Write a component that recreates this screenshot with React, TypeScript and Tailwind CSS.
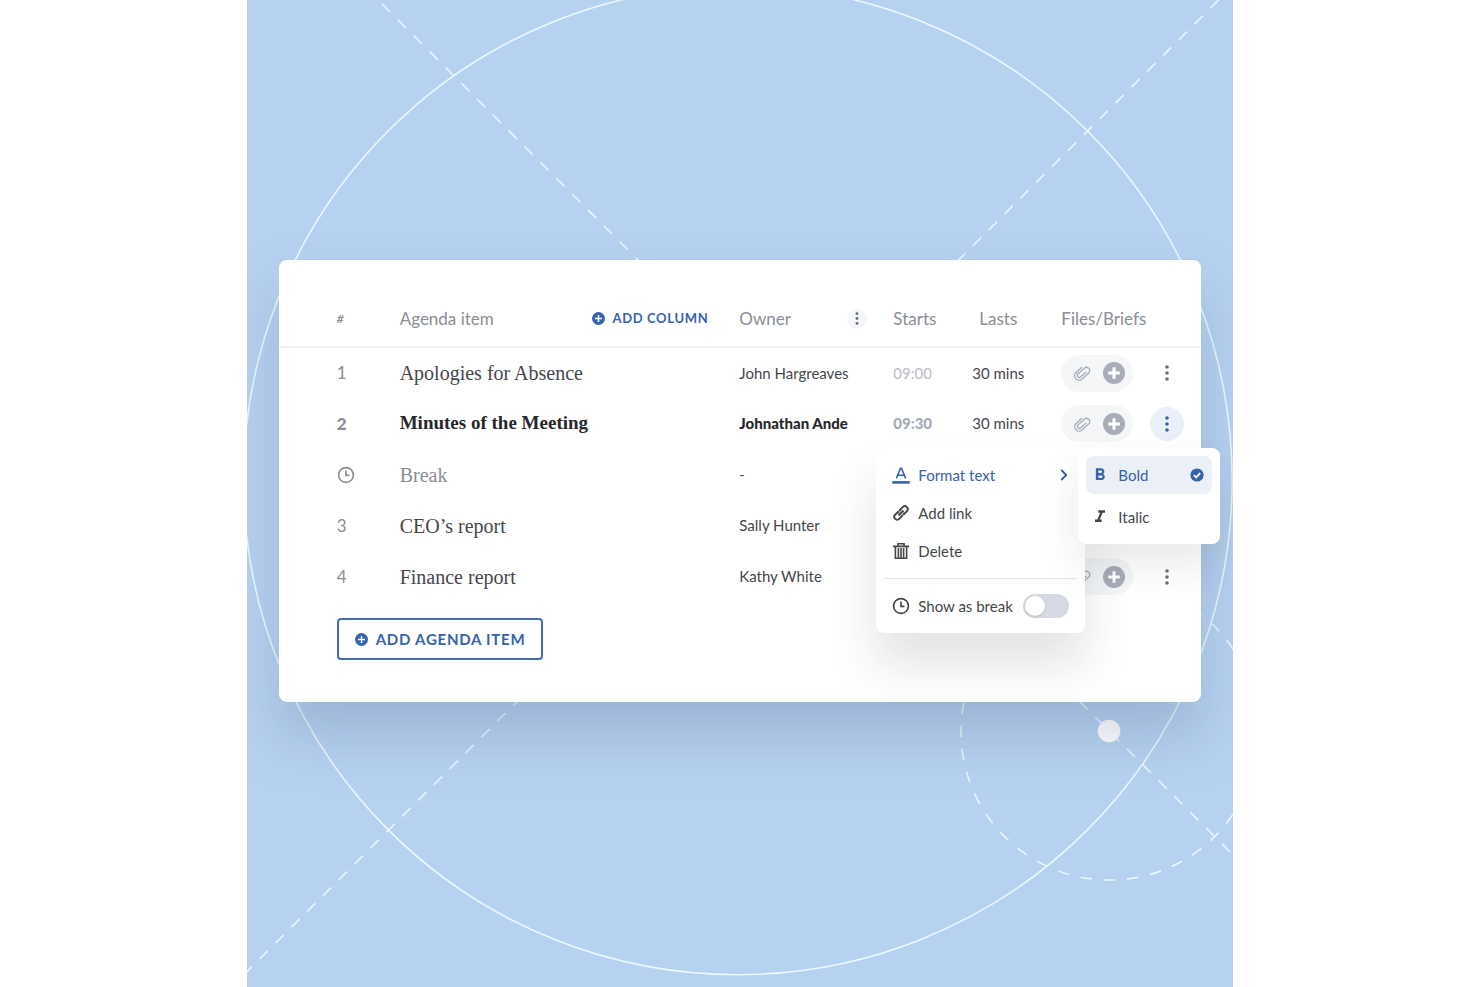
import React from 'react';
import { ChevronRight } from 'lucide-react';
import { MdFormatBold, MdFormatItalic } from 'react-icons/md';
import clsx from 'clsx';

interface AgendaItem {
  id: string;
  number?: string;
  title: string;
  owner: string;
  starts?: string;
  lasts?: string;
  active?: boolean;
  isBreak?: boolean;
  files?: boolean;
}

const ITEMS: AgendaItem[] = [
  { id: 'apologies', number: '1', title: 'Apologies for Absence', owner: 'John Hargreaves', starts: '09:00', lasts: '30 mins', files: true },
  { id: 'minutes', number: '2', title: 'Minutes of the Meeting', owner: 'Johnathan Ande', starts: '09:30', lasts: '30 mins', files: true, active: true },
  { id: 'break', title: 'Break', owner: '-', isBreak: true },
  { id: 'ceo', number: '3', title: 'CEO’s report', owner: 'Sally Hunter' },
  { id: 'finance', number: '4', title: 'Finance report', owner: 'Kathy White', files: true },
];

interface IconProps {
  className?: string;
}

const PlusCircle: React.FC<IconProps & { bold?: boolean }> = ({ className, bold }) => (
  <svg viewBox="0 0 22 22" className={className} aria-hidden="true">
    <circle cx="11" cy="11" r="11" fill="currentColor" />
    <path d="M11 5.2v11.6M5.2 11h11.6" stroke="#fff" strokeWidth={bold ? 3 : 2.6} />
  </svg>
);

const Dots: React.FC<IconProps> = ({ className }) => (
  <svg viewBox="0 0 4 16" className={className} fill="currentColor" aria-hidden="true">
    <circle cx="2" cy="2" r="1.8" />
    <circle cx="2" cy="8" r="1.8" />
    <circle cx="2" cy="14" r="1.8" />
  </svg>
);

const Clock: React.FC<IconProps> = ({ className }) => (
  <svg viewBox="0 0 18 18" className={className} fill="none" stroke="currentColor" strokeWidth="1.7" aria-hidden="true">
    <circle cx="9" cy="9" r="7.4" />
    <path d="M9 4.6V9.4h3.4" />
  </svg>
);

const Clip: React.FC<IconProps> = ({ className }) => (
  <svg viewBox="0 0 24 24" className={className} fill="none" stroke="currentColor" strokeWidth="1.8" strokeLinecap="round" aria-hidden="true">
    <g transform="rotate(48 12 12)">
      <path d="M14.8 7.6v9a2.7 2.7 0 0 1-5.4 0V5.4a4.3 4.3 0 0 1 8.6 0v11.8a5.9 5.9 0 0 1-11.8 0V7.6" />
    </g>
  </svg>
);

const TextColor: React.FC<IconProps> = ({ className }) => (
  <svg viewBox="0 0 18 18" className={className} fill="none" stroke="currentColor" aria-hidden="true">
    <path d="M4.4 12.4 8.5 2.2h1l4.1 10.2M6 9.2h6" strokeWidth="1.6" />
    <path d="M.3 16.4h17.4" strokeWidth="2.6" />
  </svg>
);

const Chain: React.FC<IconProps> = ({ className }) => (
  <svg viewBox="0 0 18 18" className={className} fill="none" stroke="currentColor" strokeWidth="1.9" aria-hidden="true">
    <g transform="rotate(-45 9 9)">
      <path d="M7.8 10.6v1.3H3.6a2.9 2.9 0 0 1 0-5.8h4.2v1.3M10.2 7.4V6.1h4.2a2.9 2.9 0 0 1 0 5.8h-4.2v-1.3M5.4 9h7.2" />
    </g>
  </svg>
);

const Trash: React.FC<IconProps> = ({ className }) => (
  <svg viewBox="0 0 18 18" className={className} fill="none" stroke="currentColor" aria-hidden="true">
    <path d="M1 4.4h16" strokeWidth="1.8" />
    <path d="M6 4V1.8h6V4" strokeWidth="1.6" />
    <path d="M3.4 5v11.2h11.2V5M6.4 6v10M9 6v10M11.6 6v10" strokeWidth="1.6" />
  </svg>
);

const CheckCircle: React.FC<IconProps> = ({ className }) => (
  <svg viewBox="0 0 14 14" className={className} aria-hidden="true">
    <circle cx="7" cy="7" r="6.6" fill="currentColor" />
    <path d="m3.8 7.2 2.3 2.2 4.1-4.3" fill="none" stroke="#fff" strokeWidth="1.8" />
  </svg>
);

const Backdrop: React.FC = () => (
  <svg
    viewBox="0 0 986 986"
    preserveAspectRatio="xMidYMin slice"
    className="absolute inset-0 h-full w-full"
    fill="none"
    stroke="#edf8fc"
    strokeWidth="1.5"
    aria-hidden="true"
  >
    <circle cx="490.5" cy="480" r="494" />
    <path d="M119-12 991 860" strokeDasharray="11.6 10.8" />
    <path d="M987-16-10 981" strokeDasharray="11.6 10.8" />
    <circle cx="862" cy="731" r="148.5" strokeDasharray="11.5 11.83" strokeDashoffset="5.75" />
    <circle cx="861.5" cy="730.5" r="11.3" fill="#fff" stroke="none" />
  </svg>
);

const FilesPill: React.FC = () => (
  <div className="flex h-[37px] w-[72px] items-center gap-3 rounded-full bg-[#f4f6f8] pl-3 text-[#a9adba]">
    <button aria-label="Attached files"><Clip className="h-[18px] w-[18px]" /></button>
    <button aria-label="Add file"><PlusCircle bold className="h-[22px] w-[22px]" /></button>
  </div>
);

const AgendaTable: React.FC = () => (
  <table className="w-full table-fixed border-collapse text-left text-[15px] text-[#45474b]">
    <colgroup>
      <col className="w-[121px]" />
      <col />
      <col className="w-[154px]" />
      <col className="w-[70px]" />
      <col className="w-[70px]" />
      <col className="w-[100px]" />
      <col className="w-[68px]" />
    </colgroup>
    <thead>
      <tr className="h-14 border-b-2 border-[#eff0f1] text-[17px] text-[#8b8e94]">
        <th className="pl-[58px] text-xs font-bold italic">#</th>
        <th className="font-normal">
          <div className="flex items-center justify-between pr-[31px]">
            Agenda item
            <button className="flex items-center gap-2 text-[13px] font-bold tracking-wider text-[#3563ae]">
              <PlusCircle className="h-[13px] w-[13px]" /> ADD COLUMN
            </button>
          </div>
        </th>
        <th className="font-normal">
          <div className="flex items-center justify-between pr-[26px]">
            Owner
            <button aria-label="Owner column options" className="grid h-5 w-5 place-items-center rounded-full bg-[#f4f6f8] text-[#6b6e75]">
              <Dots className="h-[13px] w-1" />
            </button>
          </div>
        </th>
        <th className="font-normal">Starts</th>
        <th className="text-center font-normal">Lasts</th>
        <th colSpan={2} className="pl-7 font-normal">Files/Briefs</th>
      </tr>
    </thead>
    <tbody>
      {ITEMS.map(item => (
        <tr key={item.id} className="h-[51px]">
          <td className={clsx('pl-[58px] text-[17px] text-[#8b8e94]', item.active && 'font-black')}>
            {item.isBreak ? <Clock className="h-[18px] w-[18px]" /> : item.number}
          </td>
          <td
            className={clsx(
              'font-["Liberation_Serif",serif]',
              item.active ? 'text-[19px] font-bold text-[#26282b]' : 'text-[20px]',
              item.isBreak && 'text-[#8b8e94]'
            )}
          >
            {item.title}
          </td>
          <td className={clsx(item.active && 'font-black text-[#26282b]')}>{item.owner}</td>
          <td className={clsx(item.active ? 'font-black text-[#a5abb9]' : 'text-[#b9bcc3]')}>{item.starts}</td>
          <td className="text-center">{item.lasts}</td>
          <td className="pl-7">{item.files && <FilesPill />}</td>
          <td>
            {item.files && (
              <button
                aria-label={`Options for ${item.title}`}
                className={clsx(
                  'mx-auto grid h-[34px] w-[34px] place-items-center rounded-full',
                  item.active ? 'bg-[#ebf0f8] text-[#3563ae]' : 'text-[#6b6e75]'
                )}
              >
                <Dots className="h-4 w-1" />
              </button>
            )}
          </td>
        </tr>
      ))}
    </tbody>
  </table>
);

const ItemMenu: React.FC = () => (
  <div className="absolute top-[188px] right-[116px] w-[209px] rounded-lg bg-white pt-2 text-[15px] text-[#45474b] shadow-[0_32px_48px_rgba(30,35,50,0.13)]">
    <button className="flex h-[38px] w-full items-center gap-2 pr-3 pl-4 text-[#3563ae]">
      <TextColor className="h-[18px] w-[18px]" /> Format text
      <ChevronRight className="ml-auto h-[18px] w-[18px]" strokeWidth={2.4} />
    </button>
    <button className="flex h-[38px] w-full items-center gap-2 px-4">
      <Chain className="h-[18px] w-[18px]" /> Add link
    </button>
    <button className="flex h-[38px] w-full items-center gap-2 px-4">
      <Trash className="h-[18px] w-[18px]" /> Delete
    </button>
    <hr className="mx-2 mt-2 border-[#e4e5e7]" />
    <label className="flex h-[54px] items-center gap-2 px-4">
      <Clock className="h-[18px] w-[18px]" /> Show as break
      <input
        type="checkbox"
        className="ml-auto h-6 w-[46px] appearance-none rounded-full bg-[#d5d9e1] p-[2px] before:block before:h-5 before:w-5 before:rounded-full before:bg-white before:shadow-sm checked:bg-[#3563ae] checked:before:ml-auto"
      />
    </label>
  </div>
);

const FormatMenu: React.FC = () => (
  <div className="absolute top-[188px] right-[-19px] flex w-[142px] flex-col gap-1 rounded-lg bg-white p-2 text-[15px] text-[#45474b] shadow-[0_20px_40px_rgba(30,35,50,0.1)]">
    <button className="flex h-[38px] items-center gap-2 rounded-lg bg-[#ebf0f6] pr-2 pl-1 text-[#3563ae]">
      <MdFormatBold className="h-5 w-5" /> Bold
      <CheckCircle className="ml-auto h-[14px] w-[14px]" />
    </button>
    <button className="flex h-[38px] items-center gap-2 rounded-lg pr-2 pl-1">
      <MdFormatItalic className="h-5 w-5" /> Italic
    </button>
  </div>
);

export default function App() {
  return (
    <main className="flex justify-center bg-white font-[Lato,sans-serif]">
      <div className="relative aspect-square w-2/3 overflow-hidden bg-[#b7d2f0] px-8 pt-[260px]">
        <Backdrop />
        <section className="relative rounded-lg bg-white pt-[31px] pb-[42px] shadow-[0_32px_56px_rgba(70,90,130,0.25)]">
          <AgendaTable />
          <button className="mt-4 ml-[58px] flex h-[42px] items-center gap-2 rounded border-2 border-[#3f6db5] px-4 text-[15px] font-bold tracking-wider text-[#3563ae]">
            <PlusCircle className="h-[13px] w-[13px]" /> ADD AGENDA ITEM
          </button>
          <ItemMenu />
          <FormatMenu />
        </section>
      </div>
    </main>
  );
}
